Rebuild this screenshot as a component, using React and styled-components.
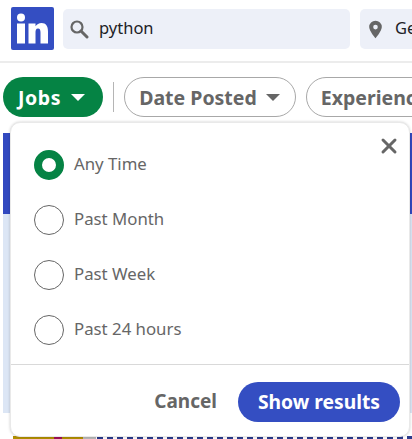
import React from "react";
import styled, { createGlobalStyle } from "styled-components";
import { X } from "lucide-react";

const GlobalStyle = createGlobalStyle`
  html, body {
    margin: 0;
    padding: 0;
    background: white;
    overflow: hidden;
    font-family: "Noto Sans", "Open Sans", sans-serif;
  }
`;

const Page = styled.div`
  position: relative;
  width: 412px;
  height: 439px;
  overflow: hidden;
  background: white;
`;

const Header = styled.header`
  display: flex;
  align-items: center;
  gap: 9px;
  height: 61px;
  padding: 0 0 0 11px;
  border-bottom: 2px solid #ececec;
  box-sizing: content-box;
`;

const Logo = styled.svg`
  flex: none;
  width: 43px;
  height: 43px;
  margin-top: -4px;
`;

const SearchBox = styled.div`
  flex: none;
  display: flex;
  align-items: center;
  gap: ${(p) => p.$gap}px;
  box-sizing: border-box;
  width: ${(p) => p.$width}px;
  height: 40px;
  margin-top: -3px;
  margin-left: ${(p) => p.$offset || 0}px;
  padding-left: ${(p) => p.$pad}px;
  background: #edf0f8;
  border-radius: 5px;
  font-size: 16.500px;
  color: #1d2226;
`;

const Query = styled.span`
  margin-bottom: 3px;
`;

const FilterRow = styled.div`
  display: flex;
  align-items: center;
  height: 40px;
  margin-top: 14px;
  padding-left: 3px;
`;

const Pill = styled.div`
  flex: none;
  display: flex;
  align-items: center;
  gap: ${(p) => (p.$active ? 10 : 9)}px;
  box-sizing: border-box;
  height: 40px;
  margin-right: 10px;
  padding: ${(p) => (p.$active ? "0 18px 0 15px" : "0 15px 0 14px")};
  border-radius: 20px;
  font-size: 19.500px;
  font-weight: 700;
  letter-spacing: ${(p) => (p.$active ? "0.6px" : "0")};
  white-space: nowrap;
  color: ${(p) => (p.$active ? "white" : "#666666")};
  background: ${(p) => (p.$active ? "#058344" : "white")};
  border: ${(p) => (p.$active ? "none" : "1px solid #a8a8a8")};
`;

const Caret = styled.span`
  flex: none;
  width: 0;
  height: 0;
  border-left: 7px solid transparent;
  border-right: 7px solid transparent;
  border-top: 7px solid ${(p) => (p.$active ? "white" : "#666666")};
`;

const Divider = styled.div`
  flex: none;
  width: 1px;
  height: 30px;
  margin-right: 10px;
  background: #b5b5b5;
`;

const Results = styled.div`
  margin-top: 16px;
  padding-left: 3px;
`;

const Banner = styled.div`
  height: 81px;
  background: #3249c0;
`;

const CardBody = styled.div`
  height: 199px;
  background: #dce6f5;
`;

const Thumb = styled.div`
  display: flex;
  height: 16px;
  margin-top: 23px;
  padding-left: 10px;
`;

const ThumbPart = styled.div`
  width: ${(p) => p.$width}px;
  background: ${(p) => p.$color};
`;

/* tops of the card title, cut off by the window edge */
const TitleStrip = styled.div`
  flex: 1;
  margin-left: 1px;
  background: repeating-linear-gradient(90deg, #2b3a8c 0 6px, transparent 6px 10px);
`;

const Popover = styled.div`
  position: absolute;
  top: 122px;
  left: 10px;
  width: 400px;
  height: 315px;
  box-sizing: border-box;
  display: flex;
  flex-direction: column;
  background: white;
  border: 1px solid #e9e9e9;
  border-radius: 10px;
  box-shadow: 0 0 3px rgba(0, 0, 0, 0.2);
`;

const CloseButton = styled.button`
  position: absolute;
  top: 11px;
  right: 8px;
  display: flex;
  padding: 0;
  border: none;
  background: none;
  color: #666666;
`;

const Options = styled.div`
  flex: 1;
  display: flex;
  flex-direction: column;
  gap: 25px;
  padding: 27px 0 0 23px;
  border-bottom: 1px solid #d9d9d9;
`;

const Option = styled.label`
  display: flex;
  align-items: center;
  gap: 10px;
  height: 30px;
  font-size: 16.800px;
  color: #666666;
`;

const OptionText = styled.span`
  margin-bottom: 3px;
`;

const Radio = styled.span`
  flex: none;
  box-sizing: border-box;
  width: 30px;
  height: 30px;
  border-radius: 50%;
  border: ${(p) => (p.$checked ? "8px solid #058344" : "1.500px solid #666666")};
`;

const Footer = styled.div`
  display: flex;
  align-items: center;
  justify-content: flex-end;
  gap: 21px;
  height: 71px;
  padding: 3px 9px 0 0;
  box-sizing: border-box;
`;

const Cancel = styled.span`
  margin-bottom: 2px;
  font-size: 19px;
  font-weight: 700;
  color: #666666;
`;

const ShowResults = styled.button`
  width: 162px;
  height: 40px;
  padding: 0 0 2px;
  border: none;
  border-radius: 20px;
  background: #344ec2;
  color: white;
  font-family: inherit;
  font-size: 19.300px;
  font-weight: 700;
`;

const OPTIONS = ["Any Time", "Past Month", "Past Week", "Past 24 hours"];

export default function App() {
  return (
    <Page>
      <GlobalStyle />
      <Header>
        <Logo viewBox="0 0 43 43">
          <rect width="43" height="43" rx="2" fill="#344ec2" />
          <circle cx="10" cy="10.500" r="4" fill="white" />
          <rect x="6" y="16.500" width="8" height="20" fill="white" />
          <path
            d="M17.500 16.500h7v2.800c1.200-2 3.500-3.300 6-3.300 4.500 0 6.500 3 6.500 8.500v12h-7.500v-10.800c0-2.800-.6-4.300-2.500-4.300-2.100 0-2.500 1.600-2.500 4.300v10.800h-7z"
            fill="white"
          />
        </Logo>
        <SearchBox $width={287} $pad={6} $gap={10}>
          <svg width="20" height="20" viewBox="0 0 20 20" fill="none" stroke="#666666" strokeWidth="2.200">
            <circle cx="8" cy="8" r="5.500" />
            <path d="M12 12l6 6" strokeWidth="3" strokeLinecap="round" />
          </svg>
          <Query>python</Query>
        </SearchBox>
        <SearchBox $width={120} $offset={1} $pad={9} $gap={13}>
          <svg width="13" height="19" viewBox="0 0 14 19">
            <path
              fillRule="evenodd"
              fill="#666666"
              d="M7 0a6.800 6.800 0 0 1 6.800 6.800C13.800 11 7 19 7 19S.2 11 .2 6.800A6.800 6.800 0 0 1 7 0zm0 4.400a2.500 2.500 0 1 0 0 5 2.500 2.500 0 0 0 0-5z"
            />
          </svg>
          <Query>Geneva</Query>
        </SearchBox>
      </Header>
      <FilterRow>
        <Pill $active>
          Jobs <Caret $active />
        </Pill>
        <Divider />
        <Pill>
          Date Posted <Caret />
        </Pill>
        <Pill>
          Experience <Caret />
        </Pill>
      </FilterRow>
      <Results>
        <Banner />
        <CardBody />
        <Thumb>
          <ThumbPart $width={41} $color="#b28f00" />
          <ThumbPart $width={8} $color="#a0105a" />
          <ThumbPart $width={21} $color="#b28f00" />
          <ThumbPart $width={13} $color="#b9b9b9" />
          <TitleStrip />
        </Thumb>
      </Results>
      <Popover>
        <CloseButton>
          <X size={24} strokeWidth={3} />
        </CloseButton>
        <Options>
          {OPTIONS.map((label, i) => (
            <Option key={label}>
              <Radio $checked={i === 0} />
              <OptionText>{label}</OptionText>
            </Option>
          ))}
        </Options>
        <Footer>
          <Cancel>Cancel</Cancel>
          <ShowResults>Show results</ShowResults>
        </Footer>
      </Popover>
    </Page>
  );
}
